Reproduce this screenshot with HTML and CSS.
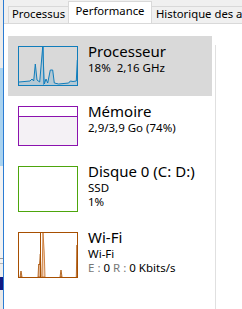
FILE: index.html
```html
<!DOCTYPE html>
<html lang="fr">
<head>
<meta charset="utf-8">
<link rel="stylesheet" href="styles.css">
</head>
<body>
<div class="frame">
  <div class="edge">
    <div class="seg seg-grey"></div>
    <div class="seg seg-blue"></div>
    <div class="seg seg-light"></div>
    <div class="seg seg-line"></div>
    <div class="seg seg-light2"></div>
    <div class="seg seg-line2"></div>
    <div class="seg seg-light3"></div>
    <div class="seg seg-navy"></div>
    <div class="seg seg-end"></div>
  </div>
  <div class="winborder"></div>
  <div class="window">
    <div class="tabs">
      <div class="tab tab-proc">Processus</div>
      <div class="tab tab-active">Performance</div>
      <div class="tab tab-hist">Historique des applications</div>
    </div>
    <div class="pane">
      <div class="sidebar">
        <div class="item selected">
          <svg class="graph" width="60" height="40" viewBox="0 0 60 40">
            <polygon points="1,39 1,36 12,35 14,33 15.7,35 17.3,18 19,34 21.7,36 24.7,1 26.3,38 28,33 29.7,37 32.3,24 34.7,24 36.3,37 40.7,38 50.7,37 52.3,35 55,35.5 58.3,35 59.3,14 59.5,39" fill="rgba(17,125,187,0.18)" stroke="none"/>
            <line x1="25.5" y1="0" x2="25.5" y2="40" stroke="#5aa3d3" stroke-width="1"/>
            <polyline points="1,36 12,35 14,33 15.7,35 17.3,18 19,34 21.7,36 24.7,1 26.3,38 28,33 29.7,37 32.3,24 34.7,24 36.3,37 40.7,38 50.7,37 52.3,35 55,35.5 58.3,35 59.3,14" fill="none" stroke="#117dbb" stroke-width="1"/>
            <rect x="0.5" y="0.5" width="59" height="39" fill="none" stroke="#117dbb" stroke-width="1"/>
          </svg>
          <div class="info">
            <div class="title">Processeur</div>
            <div class="sub"><span class="pct">18%</span><span>2,16 GHz</span></div>
          </div>
        </div>
        <div class="item">
          <svg class="graph" width="60" height="40" viewBox="0 0 60 40">
            <rect x="1" y="10.5" width="58" height="29" fill="#f4f1f5"/>
            <line x1="0" y1="10.5" x2="60" y2="10.5" stroke="#8b12ae" stroke-width="1"/>
            <rect x="0.5" y="0.5" width="59" height="39" fill="none" stroke="#8b12ae" stroke-width="1"/>
          </svg>
          <div class="info">
            <div class="title">Mémoire</div>
            <div class="sub">2,9/3,9 Go (74%)</div>
          </div>
        </div>
        <div class="item">
          <svg class="graph" width="60" height="46" viewBox="0 0 60 46">
            <rect x="0.5" y="0.5" width="59" height="45" fill="none" stroke="#4da60c" stroke-width="1"/>
          </svg>
          <div class="info">
            <div class="title">Disque 0 (C: D:)</div>
            <div class="sub">SSD</div>
            <div class="sub">1%</div>
          </div>
        </div>
        <div class="item">
          <svg class="graph" width="60" height="46" viewBox="0 0 60 46">
            <polygon points="2,45 3,39 4,45" fill="rgba(200,110,40,0.5)" stroke="#a74f01" stroke-width="0.8"/>
            <polygon points="20,45 20.7,32 21.5,33 22.3,22 23,45" fill="rgba(200,110,40,0.5)" stroke="#a74f01" stroke-width="0.8"/>
            <polygon points="24,45 25,1 26.2,20 27,45" fill="rgba(225,150,90,0.45)" stroke="#c46a20" stroke-width="0.8"/>
            <polygon points="42,45 43,38 44,45" fill="rgba(200,110,40,0.5)" stroke="#a74f01" stroke-width="0.8"/>
            <polygon points="58.3,45 59,13 59.6,45" fill="rgba(200,110,40,0.5)" stroke="#a74f01" stroke-width="0.8"/>
            <line x1="22.5" y1="0" x2="22.5" y2="46" stroke="#a74f01" stroke-width="1"/>
            <rect x="0.5" y="0.5" width="59" height="45" fill="none" stroke="#a74f01" stroke-width="1"/>
          </svg>
          <div class="info">
            <div class="title">Wi-Fi</div>
            <div class="sub">Wi-Fi</div>
            <div class="sub"><span class="lbl">E :</span> 0 <span class="lbl">R :</span> 0 Kbits/s</div>
          </div>
        </div>
      </div>
      <div class="divider"></div>
    </div>
  </div>
</div>
</body>
</html>
```

FILE: styles.css
```css
html, body {
  margin: 0;
  padding: 0;
}
body {
  width: 242px;
  height: 309px;
  overflow: hidden;
  background: #ffffff;
  font-family: "Noto Sans", "Open Sans", sans-serif;
  color: #000;
}
.frame {
  display: flex;
  height: 309px;
}
.edge {
  width: 3px;
  display: flex;
  flex-direction: column;
  flex: none;
}
.seg { flex: none; }
.seg-grey { height: 68px; background: #ebebeb; }
.seg-blue { height: 98px; background: #a9d2ef; }
.seg-light { height: 92px; background: #f2f2f2; }
.seg-line { height: 1px; background: #9a9a9a; }
.seg-light2 { height: 4px; background: #f2f2f2; }
.seg-line2 { height: 1px; background: #b4b4b4; }
.seg-light3 { height: 13px; background: #eeeeee; }
.seg-navy { height: 13px; background: #101a84; }
.seg-end { flex: 1; background: #e8e8e8; }
.winborder {
  width: 1px;
  flex: none;
  background: #2b7cd3;
}
.window {
  flex: 1;
  display: flex;
  flex-direction: column;
  min-width: 0;
}
.tabs {
  height: 24px;
  box-sizing: border-box;
  display: flex;
  align-items: flex-end;
  padding-left: 4px;
  background: #f0f0f0;
  border-bottom: 1px solid #d9d9d9;
  font-size: 11.3px;
  white-space: nowrap;
  overflow: hidden;
}
.tab {
  flex: none;
  height: 17px;
  box-sizing: border-box;
  border: 1px solid #d9d9d9;
  border-bottom: none;
  text-align: center;
  background: #f0f0f0;
  color: #000;
  line-height: 14px;
}
.tab-proc {
  width: 60px;
  border-right: none;
}
.tab-active {
  width: 84px;
  height: 23px;
  margin-bottom: -1px;
  background: #ffffff;
  line-height: 18px;
}
.tab-hist {
  border-left: none;
  text-align: left;
  padding-left: 4px;
}
.pane {
  flex: 1;
  display: flex;
  background: #ffffff;
}
.sidebar {
  width: 204px;
  margin-left: 4px;
  margin-top: 12px;
  display: flex;
  flex-direction: column;
}
.item {
  display: flex;
  gap: 10px;
  padding: 10px;
}
.item.selected {
  background: #d9d9d9;
}
.graph {
  flex: none;
  display: block;
}
.info {
  margin-top: -5px;
  display: flex;
  flex-direction: column;
}
.title {
  font-size: 15px;
  line-height: 20px;
  white-space: nowrap;
}
.sub {
  font-size: 11.5px;
  line-height: 14px;
  white-space: nowrap;
}
.pct {
  margin-right: 6px;
}
.lbl {
  color: #777777;
}
.divider {
  width: 1px;
  margin-left: 3px;
  margin-top: 21px;
  background: #e0e0e0;
}
```
